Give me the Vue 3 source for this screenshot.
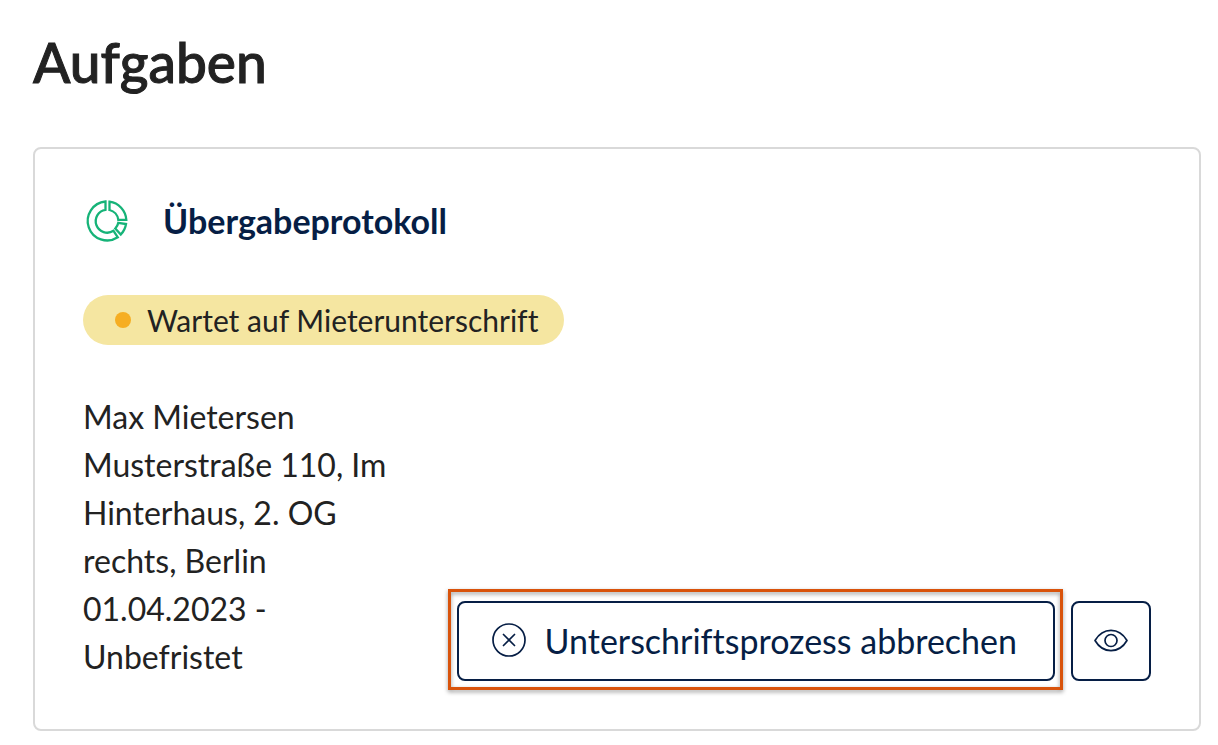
<script setup>
const lines = ['Max Mietersen', 'Musterstraße 110, Im', 'Hinterhaus, 2. OG', 'rechts, Berlin', '01.04.2023 -', 'Unbefristet']
</script>

<template>
  <main class="page">
    <h1>Aufgaben</h1>
    <section class="card">
      <header class="head">
        <svg class="logo" viewBox="0 0 48 48" fill="none" stroke="#16b378" stroke-width="2.300" aria-hidden="true">
          <path d="M22.500 4.500A19.500 19.500 0 1 0 34.800 40.300L30.500 33.800A11.500 11.500 0 1 1 22.500 12.800Z" />
          <path d="M26.500 4.700A19.500 19.500 0 0 1 43.300 22.800H35.300A11.500 11.500 0 0 0 26.500 13Z" />
          <path d="M35.300 25.800L43 27A19.500 19.500 0 0 1 37.800 37.500L32.300 31.500A11.500 11.500 0 0 0 35.300 25.800Z" />
        </svg>
        <h2>Übergabeprotokoll</h2>
      </header>
      <p class="status"><span class="dot"></span>Wartet auf Mieterunterschrift</p>
      <div class="body">
        <address><span v-for="line in lines" :key="line">{{ line }}</span></address>
        <div class="actions">
          <div class="highlight">
            <button type="button" class="cancel">
              <svg width="36" height="36" viewBox="0 0 36 36" fill="none" stroke="currentColor" stroke-width="1.700" stroke-linecap="round" aria-hidden="true">
                <circle cx="18" cy="18" r="16" /><path d="M12.500 12.500l11 11M23.500 12.500l-11 11" />
              </svg>
              Unterschriftsprozess abbrechen
            </button>
          </div>
          <button type="button" class="view" aria-label="Ansehen">
            <svg width="36" height="36" viewBox="0 0 36 36" fill="none" stroke="currentColor" stroke-width="1.700" stroke-linejoin="round" aria-hidden="true">
              <path d="M2 17.500C10 4 26 4 34 17.500C26 31 10 31 2 17.500Z" /><circle cx="18" cy="17.500" r="6" />
            </svg>
          </button>
        </div>
      </div>
    </section>
  </main>
</template>

<style>
body { margin: 0; background: #fff; }
</style>

<style scoped>
* { box-sizing: border-box; }
.page { padding: 30px 17px 14px 33px; font-family: Lato, "Open Sans", sans-serif; font-variant-ligatures: none; color: #222; }
h1 { margin: 0 0 53px; font-size: 55px; line-height: 64px; font-weight: 500; -webkit-text-stroke: 1px currentColor; }
.card { border: 2px solid #d9d9d9; border-radius: 8px; padding: 48px; }
.head { display: flex; align-items: center; gap: 32px; height: 48px; }
.logo { width: 48px; height: 48px; }
h2 { margin: 0; font-size: 34px; line-height: 48px; font-weight: 700; color: #061e45; }
.status { display: inline-flex; align-items: center; gap: 16px; height: 50px; margin: 50px 0 48px; padding: 0 26px 0 32px; border-radius: 25px; background: #f5e6a1; font-size: 30px; white-space: nowrap; }
.dot { width: 16px; height: 16px; border-radius: 50%; background: #f6ae22; }
.body { display: flex; justify-content: space-between; align-items: flex-end; }
address { font-style: normal; font-size: 32px; line-height: 48px; white-space: nowrap; }
address span { display: block; }
.actions { display: flex; align-items: center; gap: 16px; }
.highlight { position: relative; }
.highlight::after { content: ""; position: absolute; inset: -12px -8px -9px -9px; border: 3px solid #d9530b; filter: drop-shadow(0 2px 2px #0006); pointer-events: none; }
button { display: flex; align-items: center; justify-content: center; height: 80px; border: 2px solid #061e45; border-radius: 8px; background: #fff; color: #061e45; font: inherit; font-size: 34px; font-variant-ligatures: none; white-space: nowrap; }
.cancel { gap: 18px; padding: 0 36px 2px 32px; }
.view { width: 80px; padding: 0; }
</style>
